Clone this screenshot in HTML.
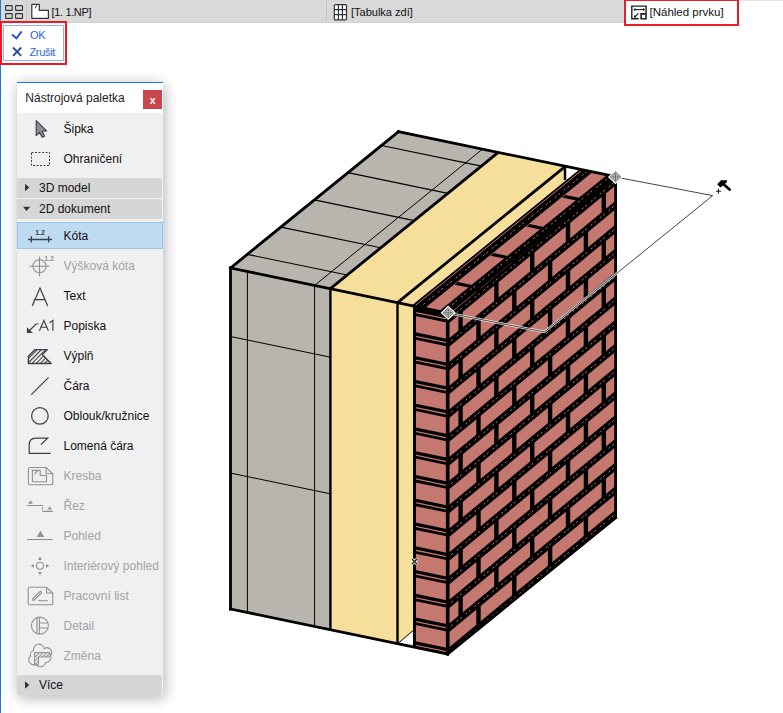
<!DOCTYPE html>
<html><head><meta charset="utf-8">
<style>
*{margin:0;padding:0;box-sizing:border-box}
html,body{width:783px;height:713px;overflow:hidden;background:#fff;font-family:"Liberation Sans",sans-serif}
.abs{position:absolute}
#tabbar{left:0;top:0;width:624px;height:23px;background:#d9d9d9;border-bottom:1px solid #d2d2d2}
.tt{position:absolute;font-size:11px;color:#111;white-space:nowrap;line-height:13px}
#pal{left:17px;top:82px;width:146px;height:613px;background:#f0f0f0;box-shadow:0 0 13px rgba(0,0,0,0.16),3px 5px 13px rgba(0,0,0,0.16)}
.it{position:absolute;left:63.5px;font-size:12px;line-height:14px;color:#111;white-space:nowrap}
.it.dis{color:#a3a3a3}
.hd{position:absolute;left:17px;width:145px;background:#d6d6d6;border-radius:2px}
.ht{position:absolute;left:39px;font-size:12px;line-height:14px;color:#111;white-space:nowrap}
</style></head><body>
<div class="abs" id="tabbar"></div>
<div class="abs" style="left:624px;top:0;width:159px;height:1px;background:#e6e6e6"></div>
<div class="abs" style="left:26px;top:1px;width:1px;height:20px;background:#c4c4c4"></div>
<div class="abs" style="left:326px;top:1px;width:1px;height:20px;background:#c4c4c4"></div>
<div class="abs" style="left:0;top:0;width:1px;height:713px;background:#1f78d8"></div>
<div class="tt" style="left:51.5px;top:6px;letter-spacing:-0.35px">[1. 1.NP]</div>
<div class="tt" style="left:351px;top:6px">[Tabulka zdí]</div>
<div class="tt" style="left:649.5px;top:6px;font-size:11.5px">[Náhled prvku]</div>
<div class="abs" style="left:624px;top:-1px;width:115px;height:26.5px;border:2px solid #ee1c24"></div>
<div class="abs" style="left:0;top:20.8px;width:67.3px;height:44px;border:2.7px solid #f01820"></div>
<div class="abs" style="left:3px;top:25px;width:61px;height:36px;border:1px solid #8fb2f2"></div>
<div class="tt" style="left:30px;top:29px;color:#2d63e3;letter-spacing:-0.2px">OK</div>
<div class="tt" style="left:29.4px;top:45.5px;color:#2d63e3;letter-spacing:-0.3px">Zrušit</div>

<div class="abs" id="pal"></div>
<div class="abs" style="left:17px;top:81.6px;width:146px;height:31.4px;background:#fff;border-top:1.5px solid #1f7ad6"></div>
<div class="tt" style="left:25.3px;top:91px;font-size:12px;color:#222;line-height:14px">Nástrojová paletka</div>
<div class="abs" style="left:143px;top:90px;width:19px;height:19px;background:#c8464c"></div>
<div class="tt" style="left:149.7px;top:93.5px;color:#fff;font-size:10.5px;font-weight:bold">x</div>
<div class="hd" style="top:178px;height:20px"></div>
<div class="hd" style="top:199px;height:20px"></div>
<div class="hd" style="top:675px;height:20px"></div>
<div class="abs" style="left:17px;top:222px;width:146px;height:27px;background:#bfdbf2;border:1px solid #99c4ee"></div>
<div class="ht" style="top:181px">3D model</div>
<div class="ht" style="top:202px">2D dokument</div>
<div class="ht" style="top:678px">Více</div>
<div class="it" style="top:122.2px">Šipka</div>
<div class="it" style="top:152.2px">Ohraničení</div>
<div class="it" style="top:229.2px">Kóta</div>
<div class="it dis" style="top:259.2px">Výšková kóta</div>
<div class="it" style="top:289.2px">Text</div>
<div class="it" style="top:319.2px">Popiska</div>
<div class="it" style="top:349.2px">Výplň</div>
<div class="it" style="top:379.2px">Čára</div>
<div class="it" style="top:409.2px">Oblouk/kružnice</div>
<div class="it" style="top:439.2px">Lomená čára</div>
<div class="it dis" style="top:469.2px">Kresba</div>
<div class="it dis" style="top:499.2px">Řez</div>
<div class="it dis" style="top:529.2px">Pohled</div>
<div class="it dis" style="top:559.2px">Interiérový pohled</div>
<div class="it dis" style="top:589.2px">Pracovní list</div>
<div class="it dis" style="top:619.2px">Detail</div>
<div class="it dis" style="top:649.2px">Změna</div>

<svg class="abs" style="left:0;top:0" width="783" height="713" viewBox="0 0 783 713">
<path d="M25,183.8 L29.3,187.5 L25,191.2 Z" fill="#333"/>
<path d="M23,206.8 H30.2 L26.6,211 Z" fill="#333"/>
<path d="M25,681.3 L29.3,685 L25,688.7 Z" fill="#333"/>
<g fill="none" stroke="#2f353b" stroke-width="1.15">
<rect x="5.6" y="5.6" width="6.6" height="4.8" rx="0.7"/><rect x="15.6" y="5.6" width="6.9" height="4.8" rx="0.7"/>
<rect x="5.6" y="13.6" width="6.6" height="4.8" rx="0.7"/><rect x="15.6" y="13.6" width="6.9" height="4.8" rx="0.7"/>
</g>
<path d="M31.8,4.4 H39.3 V10.4 H48.4 V18.3 H31.8 Z" fill="#fff" stroke="#2f353b" stroke-width="1.2" stroke-linejoin="round"/>
<path d="M36.6,5 L35.3,8.3" stroke="#2f353b" stroke-width="1"/>
<g fill="none" stroke="#2f353b" stroke-width="1.2">
<rect x="334.3" y="4.6" width="12.2" height="15.2" rx="1" fill="#fff"/>
<path d="M338.4,4.6 V19.8 M342.4,4.6 V19.8 M334.3,9.7 H346.5 M334.3,14.7 H346.5"/>
</g>
<g fill="none" stroke="#1e2328" stroke-width="1.4" stroke-linecap="butt">
<path d="M638.8,18.8 H631.8 V6.1 H646.1 V13"/>
<path d="M634.5,9.6 H644" stroke-width="1.1"/>
<path d="M638.4,13.4 L635,16.7" stroke-width="1.2"/>
</g>
<path d="M633.2,9.6 L635.4,7.9 V11.3 Z M645.2,9.6 L643,7.9 V11.3 Z M633.9,17.7 L634.1,15 L636.6,17.5 Z" fill="#1e2328"/>
<rect x="640.3" y="13" width="6.5" height="6.5" fill="#1e2328"/>
<rect x="641.9" y="14.8" width="3.3" height="3.2" fill="#fff"/>
<path d="M12,34.6 L16.4,38.3 L21.7,31.3" stroke="#2a57c9" stroke-width="2" fill="none"/>
<path d="M13,47.5 L21.2,55.8 M21.2,47.5 L13,55.8" stroke="#2a4a9c" stroke-width="1.9"/>
<path d="M36.2,120.6 L36.2,135.5 L39.6,132.3 L42.2,137.3 L44.6,136.2 L42.1,131.3 L46.6,130.9 Z" fill="#8b9095" stroke="#3b4046" stroke-width="1.1" stroke-linejoin="round"/>
<rect x="31.5" y="152.5" width="18" height="13" fill="none" stroke="#3b4046" stroke-width="1" stroke-dasharray="2 1.5"/>
<path d="M28,239.5 H52 M31.3,236.3 V242.6 M48.6,236.3 V242.6" stroke="#3b4046" stroke-width="1.3" fill="none"/><text x="40" y="235" font-size="7" font-weight="bold" fill="#3b4046" text-anchor="middle" font-family="Liberation Sans">1.2</text>
<circle cx="39.5" cy="266.2" r="6.6" fill="none" stroke="#8e9194" stroke-width="1.1"/><path d="M29.6,266.2 H49.4 M39.5,256.5 V276.3" stroke="#8e9194" stroke-width="1.1"/><text x="49" y="260.5" font-size="7" font-weight="bold" fill="#8e9194" text-anchor="middle" font-family="Liberation Sans">1.2</text>
<path d="M32.2,306 L40,288 L47.7,306 M33.8,299.7 H45.6" stroke="#3b4046" stroke-width="1.2" fill="none"/>
<path d="M27.5,332.5 L36,324 H38.5" stroke="#3b4046" stroke-width="1.2" fill="none"/><path d="M26.9,327.3 V333 H32.8 Z" fill="#3b4046"/><path d="M39.4,330.8 L43.9,320.4 L48.4,330.8 M40.9,327.2 H46.9 M49.7,322.7 L52.9,320.4 V330.8" stroke="#3b4046" stroke-width="1.15" fill="none"/>
<defs><pattern id="hat" width="3" height="3" patternUnits="userSpaceOnUse" patternTransform="rotate(45)"><rect width="1.1" height="3" fill="#3b4046"/></pattern></defs><path d="M28.4,356.3 L35.1,349.6 H47.3 L42.3,354.6 L51.1,363.5 H28.4 Z" fill="url(#hat)" stroke="#3b4046" stroke-width="1.4" stroke-linejoin="round"/>
<path d="M31.3,394.6 L48.6,377.4" stroke="#3b4046" stroke-width="1.2"/>
<circle cx="39.9" cy="415.9" r="8.3" fill="none" stroke="#3b4046" stroke-width="1.2"/>
<path d="M41,444.5 L47.7,438.2 H36 Q29.2,438.2 29.2,445 V453.4 H50.7" stroke="#3b4046" stroke-width="1.2" fill="none"/>
<path d="M30,467.5 H46 L52.8,473.8 V483 Q52.8,484.7 51,484.7 H30 Q28.4,484.7 28.4,483 V469.5 Q28.4,467.5 30,467.5 Z M46,467.5 V473.8 H52.8" stroke="#8e9194" stroke-width="1.1" fill="none"/><path d="M32.4,470.4 H40.2 V475.5 H46.5 V481.8 H32.4 Z M34.6,474 L37.8,470.6" stroke="#8e9194" stroke-width="1.1" fill="none"/>
<path d="M28,503.7 H33 L30.5,500.3 Z M47.3,509.6 H52 L49.6,506.2 Z" fill="#8e9194"/><path d="M27.1,505.5 H42.9 M42.4,507.3 V509.8 M42.3,511.4 H52.8" stroke="#8e9194" stroke-width="1.1"/>
<path d="M36.8,537 H44.2 L40.4,530.8 Z" fill="#8e9194"/><path d="M27.1,539.5 H52.8" stroke="#8e9194" stroke-width="1.1"/>
<circle cx="40" cy="565.8" r="3.5" fill="none" stroke="#8e9194" stroke-width="1.1"/><path d="M38,559.9 H41.8 L40,556.5 Z M38,572 H41.8 L40,575.5 Z M33.8,564 V567.8 L30.9,565.8 Z M46,564 V567.8 L49.4,565.8 Z" fill="#8e9194"/>
<path d="M29.5,587.3 H46.5 L52.8,593 V603.5 Q52.8,604.7 51.5,604.7 H29.5 Q28.2,604.7 28.2,603.5 V588.6 Q28.2,587.3 29.5,587.3 Z M46.5,587.3 V593 H52.8" stroke="#8e9194" stroke-width="1.1" fill="none"/><path d="M33.5,599.4 L40.5,592.4" stroke="#8e9194" stroke-width="3" stroke-linecap="round"/><path d="M33.5,599.4 L40.5,592.4" stroke="#f0f0f0" stroke-width="1" stroke-linecap="round"/><path d="M38.3,600.7 H47.7" stroke="#8e9194" stroke-width="1.1"/>
<circle cx="39.9" cy="625.6" r="8.5" fill="none" stroke="#8e9194" stroke-width="1.1"/><path d="M37,617.3 V633.9 M39.4,617.3 V633.9 M39.4,623 H48.3 M39.4,628 H48.3" stroke="#8e9194" stroke-width="1.1" fill="none"/>
<defs><pattern id="hat2" width="2.6" height="2.6" patternUnits="userSpaceOnUse" patternTransform="rotate(45)"><rect width="1.1" height="2.6" fill="#8e9194"/></pattern></defs><path d="M33.5,650.5 A5.2,5.2 0 0 1 44.2,648.6 A4.8,4.8 0 0 1 50.6,655.6 A5,5 0 0 1 45.5,662.5 A5.2,5.2 0 0 1 36,664.3 A5,5 0 0 1 30.6,656 A4.5,4.5 0 0 1 33.5,650.5 Z" stroke="#8e9194" stroke-width="1.1" fill="none"/><path d="M34.5,652.5 H50 V657 H38.5 V665 H34.5 Z" fill="url(#hat2)" stroke="#8e9194" stroke-width="1"/>
<polygon points="230.50,268.00 330.40,288.70 330.40,629.70 230.50,609.00" fill="#b8b5ae" />
<polygon points="330.40,288.70 413.20,305.86 413.20,646.86 330.40,629.70" fill="#f5df9b" />
<polygon points="413.20,305.86 447.70,313.00 447.70,654.00 413.20,646.86" fill="#c47870" />
<polygon points="398.90,642.70 413.20,630.40 413.20,644.70" fill="#fff" />
<polygon points="230.50,268.00 330.40,288.70 498.30,152.40 398.40,131.70" fill="#b8b5ae" />
<polygon points="330.40,288.70 411.80,305.57 579.70,169.26 498.30,152.40" fill="#f5df9b" />
<polygon points="411.80,305.57 447.70,313.00 615.60,176.70 579.70,169.26" fill="#c47870" />
<polygon points="566.50,167.00 579.50,169.80 566.50,180.00" fill="#fff" />
<polygon points="447.70,313.00 615.60,176.70 615.60,517.70 447.70,654.00" fill="#c47870" />
<defs><clipPath id="rf"><polygon points="447.70,313.00 615.60,176.70 615.60,517.70 447.70,654.00"/></clipPath><clipPath id="rf2"><polygon points="447.70,314.50 615.60,178.20 615.60,516.20 447.70,652.50"/></clipPath></defs>
<line x1="247.40" y1="271.50" x2="247.40" y2="612.50" stroke="#000" stroke-width="1.0" />
<line x1="314.60" y1="285.43" x2="314.60" y2="626.43" stroke="#000" stroke-width="1.0" />
<line x1="230.50" y1="336.50" x2="330.40" y2="357.20" stroke="#000" stroke-width="1.0" />
<line x1="230.50" y1="473.10" x2="330.40" y2="493.80" stroke="#000" stroke-width="1.0" />
<line x1="314.60" y1="285.43" x2="482.50" y2="149.12" stroke="#000" stroke-width="1.0" />
<line x1="247.30" y1="254.36" x2="347.20" y2="275.06" stroke="#000" stroke-width="1.1" />
<line x1="280.85" y1="227.13" x2="380.75" y2="247.83" stroke="#000" stroke-width="1.1" />
<line x1="314.40" y1="199.89" x2="414.30" y2="220.59" stroke="#000" stroke-width="1.1" />
<line x1="347.95" y1="172.65" x2="447.85" y2="193.35" stroke="#000" stroke-width="1.1" />
<line x1="381.50" y1="145.42" x2="481.40" y2="166.12" stroke="#000" stroke-width="1.1" />
<polygon points="447.70,291.96 615.60,153.16 615.60,161.66 447.70,300.46" fill="#000" clip-path="url(#rf)"/>
<line x1="447.70" y1="296.21" x2="615.60" y2="157.41" stroke="#c47870" stroke-width="1" stroke-dasharray="2.2 2.2 2.2 5" clip-path="url(#rf2)"/>
<polygon points="447.70,315.73 615.60,176.93 615.60,185.43 447.70,324.23" fill="#000" clip-path="url(#rf)"/>
<line x1="447.70" y1="319.98" x2="615.60" y2="181.18" stroke="#c47870" stroke-width="1" stroke-dasharray="2.2 2.2 2.2 5" clip-path="url(#rf2)"/>
<polygon points="447.70,339.50 615.60,200.70 615.60,209.20 447.70,348.00" fill="#000" clip-path="url(#rf)"/>
<line x1="447.70" y1="343.75" x2="615.60" y2="204.95" stroke="#c47870" stroke-width="1" stroke-dasharray="2.2 2.2 2.2 5" clip-path="url(#rf2)"/>
<polygon points="447.70,363.27 615.60,224.47 615.60,232.97 447.70,371.77" fill="#000" clip-path="url(#rf)"/>
<line x1="447.70" y1="367.52" x2="615.60" y2="228.72" stroke="#c47870" stroke-width="1" stroke-dasharray="2.2 2.2 2.2 5" clip-path="url(#rf2)"/>
<polygon points="447.70,387.04 615.60,248.24 615.60,256.74 447.70,395.54" fill="#000" clip-path="url(#rf)"/>
<line x1="447.70" y1="391.29" x2="615.60" y2="252.49" stroke="#c47870" stroke-width="1" stroke-dasharray="2.2 2.2 2.2 5" clip-path="url(#rf2)"/>
<polygon points="447.70,410.81 615.60,272.01 615.60,280.51 447.70,419.31" fill="#000" clip-path="url(#rf)"/>
<line x1="447.70" y1="415.06" x2="615.60" y2="276.26" stroke="#c47870" stroke-width="1" stroke-dasharray="2.2 2.2 2.2 5" clip-path="url(#rf2)"/>
<polygon points="447.70,434.58 615.60,295.78 615.60,304.28 447.70,443.08" fill="#000" clip-path="url(#rf)"/>
<line x1="447.70" y1="438.83" x2="615.60" y2="300.03" stroke="#c47870" stroke-width="1" stroke-dasharray="2.2 2.2 2.2 5" clip-path="url(#rf2)"/>
<polygon points="447.70,458.35 615.60,319.55 615.60,328.05 447.70,466.85" fill="#000" clip-path="url(#rf)"/>
<line x1="447.70" y1="462.60" x2="615.60" y2="323.80" stroke="#c47870" stroke-width="1" stroke-dasharray="2.2 2.2 2.2 5" clip-path="url(#rf2)"/>
<polygon points="447.70,482.12 615.60,343.32 615.60,351.82 447.70,490.62" fill="#000" clip-path="url(#rf)"/>
<line x1="447.70" y1="486.37" x2="615.60" y2="347.57" stroke="#c47870" stroke-width="1" stroke-dasharray="2.2 2.2 2.2 5" clip-path="url(#rf2)"/>
<polygon points="447.70,505.89 615.60,367.09 615.60,375.59 447.70,514.39" fill="#000" clip-path="url(#rf)"/>
<line x1="447.70" y1="510.14" x2="615.60" y2="371.34" stroke="#c47870" stroke-width="1" stroke-dasharray="2.2 2.2 2.2 5" clip-path="url(#rf2)"/>
<polygon points="447.70,529.66 615.60,390.86 615.60,399.36 447.70,538.16" fill="#000" clip-path="url(#rf)"/>
<line x1="447.70" y1="533.91" x2="615.60" y2="395.11" stroke="#c47870" stroke-width="1" stroke-dasharray="2.2 2.2 2.2 5" clip-path="url(#rf2)"/>
<polygon points="447.70,553.43 615.60,414.63 615.60,423.13 447.70,561.93" fill="#000" clip-path="url(#rf)"/>
<line x1="447.70" y1="557.68" x2="615.60" y2="418.88" stroke="#c47870" stroke-width="1" stroke-dasharray="2.2 2.2 2.2 5" clip-path="url(#rf2)"/>
<polygon points="447.70,577.20 615.60,438.40 615.60,446.90 447.70,585.70" fill="#000" clip-path="url(#rf)"/>
<line x1="447.70" y1="581.45" x2="615.60" y2="442.65" stroke="#c47870" stroke-width="1" stroke-dasharray="2.2 2.2 2.2 5" clip-path="url(#rf2)"/>
<polygon points="447.70,600.97 615.60,462.17 615.60,470.67 447.70,609.47" fill="#000" clip-path="url(#rf)"/>
<line x1="447.70" y1="605.22" x2="615.60" y2="466.42" stroke="#c47870" stroke-width="1" stroke-dasharray="2.2 2.2 2.2 5" clip-path="url(#rf2)"/>
<polygon points="447.70,624.74 615.60,485.94 615.60,494.44 447.70,633.24" fill="#000" clip-path="url(#rf)"/>
<line x1="447.70" y1="628.99" x2="615.60" y2="490.19" stroke="#c47870" stroke-width="1" stroke-dasharray="2.2 2.2 2.2 5" clip-path="url(#rf2)"/>
<polygon points="447.70,648.51 615.60,509.71 615.60,518.21 447.70,657.01" fill="#000" clip-path="url(#rf)"/>
<line x1="447.70" y1="652.76" x2="615.60" y2="513.96" stroke="#c47870" stroke-width="1" stroke-dasharray="2.2 2.2 2.2 5" clip-path="url(#rf2)"/>
<polygon points="447.70,672.28 615.60,533.48 615.60,541.98 447.70,680.78" fill="#000" clip-path="url(#rf)"/>
<line x1="447.70" y1="676.53" x2="615.60" y2="537.73" stroke="#c47870" stroke-width="1" stroke-dasharray="2.2 2.2 2.2 5" clip-path="url(#rf2)"/>
<polygon points="476.30,275.79 480.70,272.22 480.70,289.49 476.30,293.06" fill="#000" clip-path="url(#rf)"/>
<polygon points="512.10,246.19 516.50,242.62 516.50,259.89 512.10,263.46" fill="#000" clip-path="url(#rf)"/>
<polygon points="547.90,216.60 552.30,213.02 552.30,230.29 547.90,233.87" fill="#000" clip-path="url(#rf)"/>
<polygon points="583.70,187.00 588.10,183.43 588.10,200.70 583.70,204.27" fill="#000" clip-path="url(#rf)"/>
<polygon points="458.40,314.36 462.80,310.78 462.80,328.05 458.40,331.63" fill="#000" clip-path="url(#rf)"/>
<polygon points="494.20,284.76 498.60,281.19 498.60,298.46 494.20,302.03" fill="#000" clip-path="url(#rf)"/>
<polygon points="530.00,255.16 534.40,251.59 534.40,268.86 530.00,272.43" fill="#000" clip-path="url(#rf)"/>
<polygon points="565.80,225.57 570.20,222.00 570.20,239.27 565.80,242.84" fill="#000" clip-path="url(#rf)"/>
<polygon points="601.60,195.97 606.00,192.40 606.00,209.67 601.60,213.24" fill="#000" clip-path="url(#rf)"/>
<polygon points="476.30,323.33 480.70,319.76 480.70,337.03 476.30,340.60" fill="#000" clip-path="url(#rf)"/>
<polygon points="512.10,293.73 516.50,290.16 516.50,307.43 512.10,311.00" fill="#000" clip-path="url(#rf)"/>
<polygon points="547.90,264.14 552.30,260.56 552.30,277.83 547.90,281.41" fill="#000" clip-path="url(#rf)"/>
<polygon points="583.70,234.54 588.10,230.97 588.10,248.24 583.70,251.81" fill="#000" clip-path="url(#rf)"/>
<polygon points="458.40,361.90 462.80,358.32 462.80,375.59 458.40,379.17" fill="#000" clip-path="url(#rf)"/>
<polygon points="494.20,332.30 498.60,328.73 498.60,346.00 494.20,349.57" fill="#000" clip-path="url(#rf)"/>
<polygon points="530.00,302.70 534.40,299.13 534.40,316.40 530.00,319.97" fill="#000" clip-path="url(#rf)"/>
<polygon points="565.80,273.11 570.20,269.54 570.20,286.81 565.80,290.38" fill="#000" clip-path="url(#rf)"/>
<polygon points="601.60,243.51 606.00,239.94 606.00,257.21 601.60,260.78" fill="#000" clip-path="url(#rf)"/>
<polygon points="476.30,370.87 480.70,367.30 480.70,384.57 476.30,388.14" fill="#000" clip-path="url(#rf)"/>
<polygon points="512.10,341.27 516.50,337.70 516.50,354.97 512.10,358.54" fill="#000" clip-path="url(#rf)"/>
<polygon points="547.90,311.68 552.30,308.10 552.30,325.37 547.90,328.95" fill="#000" clip-path="url(#rf)"/>
<polygon points="583.70,282.08 588.10,278.51 588.10,295.78 583.70,299.35" fill="#000" clip-path="url(#rf)"/>
<polygon points="458.40,409.44 462.80,405.86 462.80,423.13 458.40,426.71" fill="#000" clip-path="url(#rf)"/>
<polygon points="494.20,379.84 498.60,376.27 498.60,393.54 494.20,397.11" fill="#000" clip-path="url(#rf)"/>
<polygon points="530.00,350.24 534.40,346.67 534.40,363.94 530.00,367.51" fill="#000" clip-path="url(#rf)"/>
<polygon points="565.80,320.65 570.20,317.08 570.20,334.35 565.80,337.92" fill="#000" clip-path="url(#rf)"/>
<polygon points="601.60,291.05 606.00,287.48 606.00,304.75 601.60,308.32" fill="#000" clip-path="url(#rf)"/>
<polygon points="476.30,418.41 480.70,414.84 480.70,432.11 476.30,435.68" fill="#000" clip-path="url(#rf)"/>
<polygon points="512.10,388.81 516.50,385.24 516.50,402.51 512.10,406.08" fill="#000" clip-path="url(#rf)"/>
<polygon points="547.90,359.22 552.30,355.64 552.30,372.91 547.90,376.49" fill="#000" clip-path="url(#rf)"/>
<polygon points="583.70,329.62 588.10,326.05 588.10,343.32 583.70,346.89" fill="#000" clip-path="url(#rf)"/>
<polygon points="458.40,456.98 462.80,453.40 462.80,470.67 458.40,474.25" fill="#000" clip-path="url(#rf)"/>
<polygon points="494.20,427.38 498.60,423.81 498.60,441.08 494.20,444.65" fill="#000" clip-path="url(#rf)"/>
<polygon points="530.00,397.78 534.40,394.21 534.40,411.48 530.00,415.05" fill="#000" clip-path="url(#rf)"/>
<polygon points="565.80,368.19 570.20,364.62 570.20,381.89 565.80,385.46" fill="#000" clip-path="url(#rf)"/>
<polygon points="601.60,338.59 606.00,335.02 606.00,352.29 601.60,355.86" fill="#000" clip-path="url(#rf)"/>
<polygon points="476.30,465.95 480.70,462.38 480.70,479.65 476.30,483.22" fill="#000" clip-path="url(#rf)"/>
<polygon points="512.10,436.35 516.50,432.78 516.50,450.05 512.10,453.62" fill="#000" clip-path="url(#rf)"/>
<polygon points="547.90,406.76 552.30,403.18 552.30,420.45 547.90,424.03" fill="#000" clip-path="url(#rf)"/>
<polygon points="583.70,377.16 588.10,373.59 588.10,390.86 583.70,394.43" fill="#000" clip-path="url(#rf)"/>
<polygon points="458.40,504.52 462.80,500.94 462.80,518.21 458.40,521.79" fill="#000" clip-path="url(#rf)"/>
<polygon points="494.20,474.92 498.60,471.35 498.60,488.62 494.20,492.19" fill="#000" clip-path="url(#rf)"/>
<polygon points="530.00,445.32 534.40,441.75 534.40,459.02 530.00,462.59" fill="#000" clip-path="url(#rf)"/>
<polygon points="565.80,415.73 570.20,412.16 570.20,429.43 565.80,433.00" fill="#000" clip-path="url(#rf)"/>
<polygon points="601.60,386.13 606.00,382.56 606.00,399.83 601.60,403.40" fill="#000" clip-path="url(#rf)"/>
<polygon points="476.30,513.49 480.70,509.92 480.70,527.19 476.30,530.76" fill="#000" clip-path="url(#rf)"/>
<polygon points="512.10,483.89 516.50,480.32 516.50,497.59 512.10,501.16" fill="#000" clip-path="url(#rf)"/>
<polygon points="547.90,454.30 552.30,450.72 552.30,467.99 547.90,471.57" fill="#000" clip-path="url(#rf)"/>
<polygon points="583.70,424.70 588.10,421.13 588.10,438.40 583.70,441.97" fill="#000" clip-path="url(#rf)"/>
<polygon points="458.40,552.06 462.80,548.48 462.80,565.75 458.40,569.33" fill="#000" clip-path="url(#rf)"/>
<polygon points="494.20,522.46 498.60,518.89 498.60,536.16 494.20,539.73" fill="#000" clip-path="url(#rf)"/>
<polygon points="530.00,492.86 534.40,489.29 534.40,506.56 530.00,510.13" fill="#000" clip-path="url(#rf)"/>
<polygon points="565.80,463.27 570.20,459.70 570.20,476.97 565.80,480.54" fill="#000" clip-path="url(#rf)"/>
<polygon points="601.60,433.67 606.00,430.10 606.00,447.37 601.60,450.94" fill="#000" clip-path="url(#rf)"/>
<polygon points="476.30,561.03 480.70,557.46 480.70,574.73 476.30,578.30" fill="#000" clip-path="url(#rf)"/>
<polygon points="512.10,531.43 516.50,527.86 516.50,545.13 512.10,548.70" fill="#000" clip-path="url(#rf)"/>
<polygon points="547.90,501.84 552.30,498.26 552.30,515.53 547.90,519.11" fill="#000" clip-path="url(#rf)"/>
<polygon points="583.70,472.24 588.10,468.67 588.10,485.94 583.70,489.51" fill="#000" clip-path="url(#rf)"/>
<polygon points="458.40,599.60 462.80,596.02 462.80,613.29 458.40,616.87" fill="#000" clip-path="url(#rf)"/>
<polygon points="494.20,570.00 498.60,566.43 498.60,583.70 494.20,587.27" fill="#000" clip-path="url(#rf)"/>
<polygon points="530.00,540.40 534.40,536.83 534.40,554.10 530.00,557.67" fill="#000" clip-path="url(#rf)"/>
<polygon points="565.80,510.81 570.20,507.24 570.20,524.51 565.80,528.08" fill="#000" clip-path="url(#rf)"/>
<polygon points="601.60,481.21 606.00,477.64 606.00,494.91 601.60,498.48" fill="#000" clip-path="url(#rf)"/>
<polygon points="476.30,608.57 480.70,605.00 480.70,622.27 476.30,625.84" fill="#000" clip-path="url(#rf)"/>
<polygon points="512.10,578.97 516.50,575.40 516.50,592.67 512.10,596.24" fill="#000" clip-path="url(#rf)"/>
<polygon points="547.90,549.38 552.30,545.80 552.30,563.07 547.90,566.65" fill="#000" clip-path="url(#rf)"/>
<polygon points="583.70,519.78 588.10,516.21 588.10,533.48 583.70,537.05" fill="#000" clip-path="url(#rf)"/>
<polygon points="458.40,647.14 462.80,643.56 462.80,660.83 458.40,664.41" fill="#000" clip-path="url(#rf)"/>
<polygon points="494.20,617.54 498.60,613.97 498.60,631.24 494.20,634.81" fill="#000" clip-path="url(#rf)"/>
<polygon points="530.00,587.94 534.40,584.37 534.40,601.64 530.00,605.21" fill="#000" clip-path="url(#rf)"/>
<polygon points="565.80,558.35 570.20,554.78 570.20,572.05 565.80,575.62" fill="#000" clip-path="url(#rf)"/>
<polygon points="601.60,528.75 606.00,525.18 606.00,542.45 601.60,546.02" fill="#000" clip-path="url(#rf)"/>
<polygon points="413.20,308.09 447.70,315.23 447.70,318.53 413.20,311.39" fill="#000" />
<polygon points="413.20,312.69 447.70,319.83 447.70,322.63 413.20,315.49" fill="#000" />
<polygon points="413.20,331.86 447.70,339.00 447.70,342.30 413.20,335.16" fill="#000" />
<polygon points="413.20,336.46 447.70,343.60 447.70,346.40 413.20,339.26" fill="#000" />
<polygon points="413.20,355.63 447.70,362.77 447.70,366.07 413.20,358.93" fill="#000" />
<polygon points="413.20,360.23 447.70,367.37 447.70,370.17 413.20,363.03" fill="#000" />
<polygon points="413.20,379.40 447.70,386.54 447.70,389.84 413.20,382.70" fill="#000" />
<polygon points="413.20,384.00 447.70,391.14 447.70,393.94 413.20,386.80" fill="#000" />
<polygon points="413.20,403.17 447.70,410.31 447.70,413.61 413.20,406.47" fill="#000" />
<polygon points="413.20,407.77 447.70,414.91 447.70,417.71 413.20,410.57" fill="#000" />
<polygon points="413.20,426.94 447.70,434.08 447.70,437.38 413.20,430.24" fill="#000" />
<polygon points="413.20,431.54 447.70,438.68 447.70,441.48 413.20,434.34" fill="#000" />
<polygon points="413.20,450.71 447.70,457.85 447.70,461.15 413.20,454.01" fill="#000" />
<polygon points="413.20,455.31 447.70,462.45 447.70,465.25 413.20,458.11" fill="#000" />
<polygon points="413.20,474.48 447.70,481.62 447.70,484.92 413.20,477.78" fill="#000" />
<polygon points="413.20,479.08 447.70,486.22 447.70,489.02 413.20,481.88" fill="#000" />
<polygon points="413.20,498.25 447.70,505.39 447.70,508.69 413.20,501.55" fill="#000" />
<polygon points="413.20,502.85 447.70,509.99 447.70,512.79 413.20,505.65" fill="#000" />
<polygon points="413.20,522.02 447.70,529.16 447.70,532.46 413.20,525.32" fill="#000" />
<polygon points="413.20,526.62 447.70,533.76 447.70,536.56 413.20,529.42" fill="#000" />
<polygon points="413.20,545.79 447.70,552.93 447.70,556.23 413.20,549.09" fill="#000" />
<polygon points="413.20,550.39 447.70,557.53 447.70,560.33 413.20,553.19" fill="#000" />
<polygon points="413.20,569.56 447.70,576.70 447.70,580.00 413.20,572.86" fill="#000" />
<polygon points="413.20,574.16 447.70,581.30 447.70,584.10 413.20,576.96" fill="#000" />
<polygon points="413.20,593.33 447.70,600.47 447.70,603.77 413.20,596.63" fill="#000" />
<polygon points="413.20,597.93 447.70,605.07 447.70,607.87 413.20,600.73" fill="#000" />
<polygon points="413.20,617.10 447.70,624.24 447.70,627.54 413.20,620.40" fill="#000" />
<polygon points="413.20,621.70 447.70,628.84 447.70,631.64 413.20,624.50" fill="#000" />
<polygon points="413.20,640.87 447.70,648.01 447.70,651.31 413.20,644.17" fill="#000" />
<polygon points="413.20,645.47 447.70,652.61 447.70,654.00 413.20,646.86" fill="#000" />
<polygon points="411.80,305.57 424.80,308.26 592.70,171.96 579.70,169.26" fill="#000" />
<line x1="414.50" y1="306.12" x2="582.40" y2="169.82" stroke="#c47870" stroke-width="1.0" />
<line x1="419.80" y1="307.22" x2="587.70" y2="170.92" stroke="#c47870" stroke-width="1.0" stroke-dasharray="2.2 2.2 2.2 5"/>
<polygon points="439.10,311.22 447.70,313.00 615.60,176.70 607.00,174.92" fill="#000" />
<line x1="443.00" y1="312.03" x2="610.90" y2="175.73" stroke="#c47870" stroke-width="1.0" stroke-dasharray="2.2 2.2 2.2 5"/>
<polygon points="454.70,284.70 468.70,287.60 471.90,285.00 457.90,282.10" fill="#000" />
<polygon points="490.50,255.64 504.50,258.54 507.70,255.94 493.70,253.04" fill="#000" />
<polygon points="526.30,226.57 540.30,229.48 543.50,226.88 529.50,223.98" fill="#000" />
<polygon points="562.10,197.51 576.10,200.41 579.30,197.82 565.30,194.91" fill="#000" />
<line x1="230.50" y1="268.00" x2="230.50" y2="609.00" stroke="#000" stroke-width="2.8" stroke-linecap="square"/>
<line x1="230.50" y1="268.00" x2="398.40" y2="131.70" stroke="#000" stroke-width="2.8" stroke-linecap="square"/>
<line x1="230.50" y1="268.00" x2="447.70" y2="313.00" stroke="#000" stroke-width="2.8" stroke-linecap="square"/>
<line x1="230.50" y1="609.00" x2="447.70" y2="654.00" stroke="#000" stroke-width="2.8" stroke-linecap="square"/>
<line x1="447.70" y1="313.00" x2="615.60" y2="176.70" stroke="#000" stroke-width="2.8" stroke-linecap="square"/>
<line x1="447.70" y1="654.00" x2="615.60" y2="517.70" stroke="#000" stroke-width="2.8" stroke-linecap="square"/>
<line x1="615.60" y1="176.70" x2="615.60" y2="517.70" stroke="#000" stroke-width="2.8" stroke-linecap="square"/>
<line x1="398.40" y1="131.70" x2="615.60" y2="176.70" stroke="#000" stroke-width="2.8" stroke-linecap="square"/>
<line x1="447.70" y1="313.00" x2="447.70" y2="654.00" stroke="#000" stroke-width="2.8" stroke-linecap="square"/>
<line x1="330.40" y1="288.70" x2="330.40" y2="629.70" stroke="#000" stroke-width="2.4" />
<line x1="397.50" y1="302.60" x2="397.50" y2="643.60" stroke="#000" stroke-width="2.4" />
<line x1="414.50" y1="306.12" x2="414.50" y2="647.12" stroke="#000" stroke-width="3.0" />
<line x1="330.40" y1="288.70" x2="498.30" y2="152.40" stroke="#000" stroke-width="2.8" />
<line x1="397.50" y1="302.60" x2="565.40" y2="166.30" stroke="#000" stroke-width="2.8" />
<polygon points="413.20,305.86 447.70,313.00 447.70,315.80 413.20,308.66" fill="#000" />
<line x1="565.00" y1="166.00" x2="565.00" y2="180.00" stroke="#000" stroke-width="2.4" />
<line x1="447.70" y1="313.00" x2="447.70" y2="654.00" stroke="#000" stroke-width="3.6" />
<line x1="398.90" y1="642.70" x2="413.20" y2="630.40" stroke="#000" stroke-width="1.0" />
<!-- selection lines -->
<g fill="none" stroke-linejoin="miter">
<path d="M448,313 L544.3,332 L712.7,195.6 L615.4,177" stroke="#fff" stroke-width="2.4" opacity="0.85"/>
<path d="M448,313 L544.3,332 L712.7,195.6 L615.4,177" stroke="#444" stroke-width="1"/>
</g>
<path d="M448.2,306.5 L454.7,312.8 L448.2,319.1 L441.7,312.8 Z" fill="#e6e6e6" stroke="#fafafa" stroke-width="1.4"/><path d="M448.2,307.8 L453.4,312.8 L448.2,317.8 L443.0,312.8 Z" fill="none" stroke="#333" stroke-width="0.7"/><circle cx="448.2" cy="312.8" r="2.4" fill="none" stroke="#555" stroke-width="0.7"/><path d="M448.2,308.6 V317.0 M444.0,312.8 H452.4" stroke="#444" stroke-width="0.7"/>
<path d="M615.5,170.6 L622.0,176.9 L615.5,183.20000000000002 L609.0,176.9 Z" fill="#e6e6e6" stroke="#fafafa" stroke-width="1.4"/><path d="M615.5,171.9 L620.7,176.9 L615.5,181.9 L610.3,176.9 Z" fill="none" stroke="#333" stroke-width="0.7"/><circle cx="615.5" cy="176.9" r="2.4" fill="none" stroke="#555" stroke-width="0.7"/><path d="M615.5,172.70000000000002 V181.1 M611.3,176.9 H619.7" stroke="#444" stroke-width="0.7"/>
<path d="M716,191.2 H721 M718.4,188.7 V193.7" stroke="#000" stroke-width="0.9"/>
<path d="M717.2,184.2 L721,180.2 H727.2 L726.6,182.4 L720.4,187.6 Z" fill="#000"/><path d="M723.5,184.3 L729.6,189.6" stroke="#000" stroke-width="2.7" stroke-linecap="round"/>
<path d="M412,559 L417,564 M417,559 L412,564" stroke="#fff" stroke-width="3"/>
<path d="M412,559 L417,564 M417,559 L412,564" stroke="#222" stroke-width="1.4"/>
</svg>
</body></html>
